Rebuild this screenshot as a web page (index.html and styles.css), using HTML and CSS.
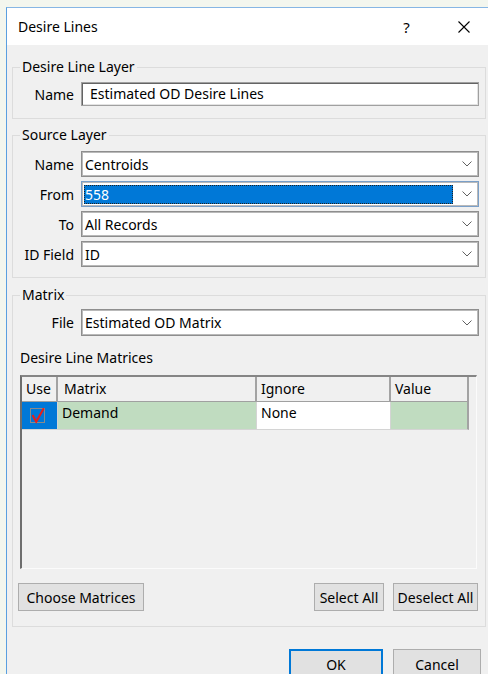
FILE: index.html
```html
<!DOCTYPE html>
<html lang="en">
<head>
<meta charset="utf-8">
<title>Desire Lines</title>
<link rel="stylesheet" href="styles.css">
</head>
<body>
<div class="window">
  <div class="titlebar">
    <span class="title">Desire Lines</span>
    <span class="caption-btn help">?</span>
    <span class="caption-btn">
      <svg width="12" height="12" viewBox="0 0 12 12"><path d="M0.5 0.5L11.5 11.5M11.5 0.5L0.5 11.5" stroke="#000" stroke-width="1.1" fill="none"/></svg>
    </span>
  </div>

  <div class="client">
    <fieldset class="group">
      <legend>Desire Line Layer</legend>
      <div class="form form-layer">
        <label>Name</label>
        <div class="textbox">Estimated OD Desire Lines</div>
      </div>
    </fieldset>

    <fieldset class="group">
      <legend>Source Layer</legend>
      <div class="form form-source">
        <label>Name</label>
        <div class="combo"><span class="value">Centroids</span><svg class="chev" width="10" height="6" viewBox="0 0 10 6"><path d="M0.5 0.5L5 5L9.5 0.5" stroke="#606060" fill="none"/></svg></div>
        <label>From</label>
        <div class="combo focused"><span class="value selected">558</span><svg class="chev" width="10" height="6" viewBox="0 0 10 6"><path d="M0.5 0.5L5 5L9.5 0.5" stroke="#606060" fill="none"/></svg></div>
        <label>To</label>
        <div class="combo"><span class="value">All Records</span><svg class="chev" width="10" height="6" viewBox="0 0 10 6"><path d="M0.5 0.5L5 5L9.5 0.5" stroke="#606060" fill="none"/></svg></div>
        <label>ID Field</label>
        <div class="combo"><span class="value">ID</span><svg class="chev" width="10" height="6" viewBox="0 0 10 6"><path d="M0.5 0.5L5 5L9.5 0.5" stroke="#606060" fill="none"/></svg></div>
      </div>
    </fieldset>

    <fieldset class="group group-matrix">
      <legend>Matrix</legend>
      <div class="form form-file">
        <label>File</label>
        <div class="combo tall"><span class="value">Estimated OD Matrix</span><svg class="chev" width="10" height="6" viewBox="0 0 10 6"><path d="M0.5 0.5L5 5L9.5 0.5" stroke="#606060" fill="none"/></svg></div>
      </div>
      <div class="matrices">
        <div class="matrices-label">Desire Line Matrices</div>
        <div class="grid">
          <div class="cell head">Use</div>
          <div class="cell head head-matrix">Matrix</div>
          <div class="cell head">Ignore</div>
          <div class="cell head">Value</div>

          <div class="cell row use-cell">
            <span class="checkbox">
              <svg width="15" height="17" viewBox="0 0 15 17"><path d="M2.5 8L6.2 14.8L13.8 1.2" stroke="#ee1c14" stroke-width="2" fill="none"/></svg>
            </span>
          </div>
          <div class="cell row green">Demand</div>
          <div class="cell row white">None</div>
          <div class="cell row green last"></div>
        </div>
        <div class="button-row">
          <button class="btn btn-choose">Choose Matrices</button>
          <span class="spacer"></span>
          <button class="btn btn-select">Select All</button>
          <button class="btn btn-deselect">Deselect All</button>
        </div>
      </div>
    </fieldset>

    <div class="footer">
      <button class="btn btn-ok">OK</button>
      <button class="btn btn-cancel">Cancel</button>
    </div>
  </div>
</div>
</body>
</html>
```

FILE: styles.css
```css
* { box-sizing: border-box; }

html, body {
  margin: 0;
  height: 100%;
}

body {
  background: #f3f6ee;
  overflow: hidden;
  font-family: "Noto Sans", "Open Sans", sans-serif;
  font-size: 14px;
  color: #000;
}

/* dialog frame */
.window {
  margin: 7px 0 0 6px;
  width: 486px;
  height: 690px;
  border-left: 1px solid #5a9fe0;
  border-top: 1px solid #86b6e4;
  background: #f0f0f0;
  display: flex;
  flex-direction: column;
}

.titlebar {
  flex: none;
  height: 37px;
  background: #fff;
  display: flex;
  align-items: center;
}

.title {
  flex: 1;
  padding-left: 11px;
  line-height: 18px;
}

.caption-btn {
  width: 57px;
  height: 100%;
  display: flex;
  align-items: center;
  justify-content: center;
}

.help {
  font-size: 15px;
}

.client {
  padding: 13px 6px 0 5px;
}

/* group boxes */
.group {
  margin: 0;
  padding: 0;
  min-width: 0;
  border: 1px solid #dcdcdc;
}

.group + .group { margin-top: 7px; }
.group-matrix.group { margin-top: 8px; }

.group legend {
  margin-left: 7px;
  padding: 0 2px;
  line-height: 18px;
}

/* label / field rows */
.form {
  display: grid;
  grid-template-columns: 61px minmax(0, 1fr);
  column-gap: 7px;
  row-gap: 4px;
  align-items: center;
}

.form label {
  text-align: right;
}

.form-layer { padding: 6px 6px 12px 0; }
.form-source { padding: 7px 6px 10px 0; }
.form-file { padding: 5px 6px 0 0; }

.textbox {
  height: 24px;
  background: #fff;
  border: 1px solid #a0a0a0;
  box-shadow: inset 1px 1px 0 #646464, inset -1px -1px 0 #e3e3e3;
  padding-left: 8px;
  line-height: 21px;
}

.combo {
  height: 26px;
  min-width: 0;
  background: #fff;
  border: 1px solid #8e8e8e;
  box-shadow: inset 0 0 0 1px #b9b9b9;
  display: flex;
  align-items: center;
  padding: 0 6px 0 3px;
}

.combo.tall { height: 27px; }

.combo .value {
  flex: 1;
  min-width: 0;
  line-height: 19px;
}

.combo .chev { flex: none; }

.combo.focused {
  border-color: #7a9fc8;
  padding-left: 2px;
}

.combo .selected {
  margin-right: 9px;
  background: #0078d7;
  color: #fff;
  outline: 1px dotted #222;
  outline-offset: -1px;
  padding-left: 1px;
}

/* matrices list */
.matrices {
  padding: 13px 7px 15px 5px;
}

.matrices-label {
  line-height: 18px;
  padding-left: 2px;
}

.grid {
  margin: 8px 1px 0 2px;
  height: 194px;
  border-top: 2px solid #858585;
  border-left: 2px solid #6e6e6e;
  border-right: 1px solid #fbfbfb;
  border-bottom: 1px solid #fbfbfb;
  display: grid;
  grid-template-columns: 36px 199px 134px 78px;
  grid-template-rows: 25px 28px;
  align-content: start;
}

.cell {
  border-right: 1px solid #a0a0a0;
  padding-left: 4px;
  white-space: nowrap;
}

.cell.head {
  background: #f0f0f0;
  border-right: 2px solid #a3a3a3;
  border-bottom: 1px solid #a0a0a0;
  line-height: 23px;
}

.cell.head-matrix { padding-left: 6px; }

.cell.row {
  border-bottom: 1px solid #d4d4d4;
  border-right: 1px solid #d4d4d4;
  line-height: 20px;
  padding-top: 1px;
}

.cell.row.last { border-right: 2px solid #a3a3a3; }

.use-cell {
  background: #0078d7;
  position: relative;
}

.checkbox {
  position: absolute;
  left: 8px;
  top: 6px;
  width: 15px;
  height: 15px;
  border: 1px solid #8a8a8a;
}

.checkbox svg {
  position: absolute;
  left: -1px;
  top: -2px;
}

.green { background: #c0dcc0; }
.white { background: #fff; }

/* buttons */
.button-row {
  margin-top: 14px;
  display: flex;
}

.spacer { flex: 1; }

.btn {
  height: 28px;
  margin: 0;
  padding: 0;
  background: #e1e1e1;
  border: 1px solid #adadad;
  font: inherit;
  color: #000;
  display: flex;
  align-items: center;
  justify-content: center;
}

.btn-choose { width: 126px; }
.btn-select { width: 70px; margin-right: 9px; }
.btn-deselect { width: 85px; }

.footer {
  margin-top: 22px;
  padding-right: 5px;
  display: flex;
  justify-content: flex-end;
  gap: 10px;
}

.btn-ok {
  width: 94px;
  height: 30px;
  border: 2px solid #0078d7;
}

.btn-cancel {
  width: 88px;
  height: 30px;
}
```
